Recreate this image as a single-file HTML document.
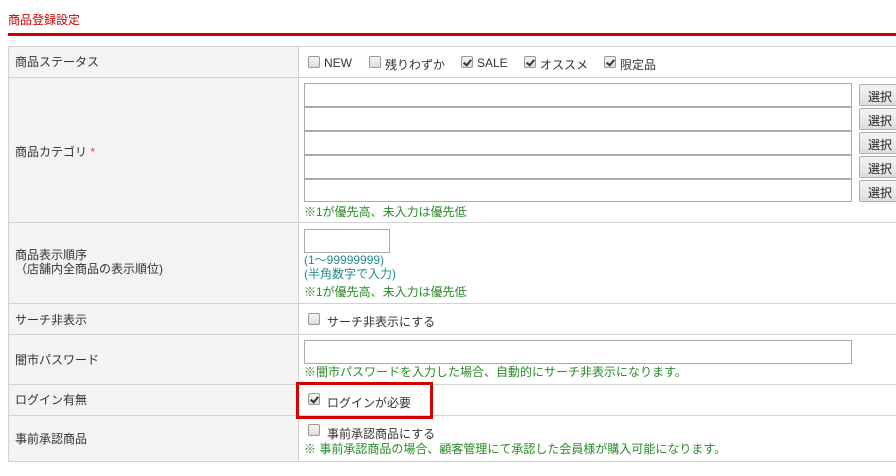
<!DOCTYPE html>
<html><head><meta charset="utf-8"><style>
*{box-sizing:border-box;margin:0;padding:0}
body{width:896px;height:476px;overflow:hidden;background:#fff;font-family:"Liberation Sans","Noto Sans CJK JP",sans-serif;font-size:12px;color:#333;position:relative}
.a{position:absolute;white-space:nowrap}
.title{left:8px;top:11px;color:#c00;font-size:12px}
.red{left:8px;top:33px;width:888px;height:3px;background:#c00}
.lab{position:absolute;left:8px;width:291px;background:#f3f3f3;border:1px solid #d2d2d2;border-top:none}
.val{position:absolute;left:298px;width:610px;border:1px solid #d2d2d2;border-top:none;border-left:none}
.cb{position:absolute;width:12px;height:12px;border:1px solid #999;border-radius:2px;background:linear-gradient(#f4f4f4,#ddd)}
.cb.c::after{content:"";position:absolute;left:3px;top:1px;width:3px;height:6px;border:solid #333;border-width:0 2px 2px 0;transform:rotate(40deg)}
.inp{position:absolute;border:1px solid #aaa;background:#fff}
.btn{position:absolute;left:859px;width:44px;height:22px;border:1px solid #adadad;background:linear-gradient(#f4f4f4,#dedede);border-radius:2px;padding:3px 0 0 8px;color:#222}
.g{color:#2a8a2a}
.gb{color:#2a8a8a}
</style></head><body>
<div class="a title">商品登録設定</div>
<div class="a red"></div>
<div class="a" style="left:8px;top:46px;width:900px;height:1px;background:#d2d2d2"></div>

<div class="lab" style="top:47px;height:31px"></div><div class="val" style="top:47px;height:31px"></div>
<div class="lab" style="top:78px;height:145px"></div><div class="val" style="top:78px;height:145px"></div>
<div class="lab" style="top:223px;height:81px"></div><div class="val" style="top:223px;height:81px"></div>
<div class="lab" style="top:304px;height:31px"></div><div class="val" style="top:304px;height:31px"></div>
<div class="lab" style="top:335px;height:50px"></div><div class="val" style="top:335px;height:50px"></div>
<div class="lab" style="top:385px;height:31px"></div><div class="val" style="top:385px;height:31px"></div>
<div class="lab" style="top:416px;height:46px"></div><div class="val" style="top:416px;height:46px"></div>

<div class="a" style="left:15px;top:53px">商品ステータス</div>
<div class="a" style="left:15px;top:143px">商品カテゴリ <span style="color:#e44">*</span></div>
<div class="a" style="left:15px;top:248px;line-height:14px">商品表示順序<br>（店舗内全商品の表示順位)</div>
<div class="a" style="left:15px;top:311px">サーチ非表示</div>
<div class="a" style="left:15px;top:351px">闇市パスワード</div>
<div class="a" style="left:15px;top:391px">ログイン有無</div>
<div class="a" style="left:15px;top:430px">事前承認商品</div>

<div class="cb" style="left:308px;top:56px"></div><div class="a" style="left:324px;top:56px">NEW</div>
<div class="cb" style="left:369px;top:56px"></div><div class="a" style="left:385px;top:56px">残りわずか</div>
<div class="cb c" style="left:461px;top:56px"></div><div class="a" style="left:477px;top:56px">SALE</div>
<div class="cb c" style="left:524px;top:56px"></div><div class="a" style="left:540px;top:56px">オススメ</div>
<div class="cb c" style="left:604px;top:56px"></div><div class="a" style="left:620px;top:56px">限定品</div>

<div class="inp" style="left:304px;top:83px;width:548px;height:24px"></div>
<div class="inp" style="left:304px;top:107px;width:548px;height:24px"></div>
<div class="inp" style="left:304px;top:131px;width:548px;height:24px"></div>
<div class="inp" style="left:304px;top:155px;width:548px;height:24px"></div>
<div class="inp" style="left:304px;top:179px;width:548px;height:23px"></div>
<div class="btn" style="top:84px">選択</div>
<div class="btn" style="top:108px">選択</div>
<div class="btn" style="top:132px">選択</div>
<div class="btn" style="top:156px">選択</div>
<div class="btn" style="top:180px">選択</div>
<div class="a g" style="left:304px;top:203px">※1が優先高、未入力は優先低</div>

<div class="inp" style="left:304px;top:229px;width:86px;height:24px"></div>
<div class="a gb" style="left:304px;top:253px;line-height:14px">(1～99999999)<br>(半角数字で入力)</div>
<div class="a g" style="left:304px;top:283px">※1が優先高、未入力は優先低</div>

<div class="cb" style="left:308px;top:313px"></div><div class="a" style="left:327px;top:313px">サーチ非表示にする</div>

<div class="inp" style="left:304px;top:340px;width:548px;height:24px"></div>
<div class="a g" style="left:304px;top:363px">※闇市パスワードを入力した場合、自動的にサーチ非表示になります。</div>

<div class="a" style="left:296px;top:382px;width:137px;height:37px;border:3px solid #d40000"></div>
<div class="cb c" style="left:308px;top:393px"></div><div class="a" style="left:327px;top:394px">ログインが必要</div>

<div class="cb" style="left:308px;top:424px"></div><div class="a" style="left:327px;top:425px">事前承認商品にする</div>
<div class="a g" style="left:304px;top:440px">※ 事前承認商品の場合、顧客管理にて承認した会員様が購入可能になります。</div>
</body></html>
